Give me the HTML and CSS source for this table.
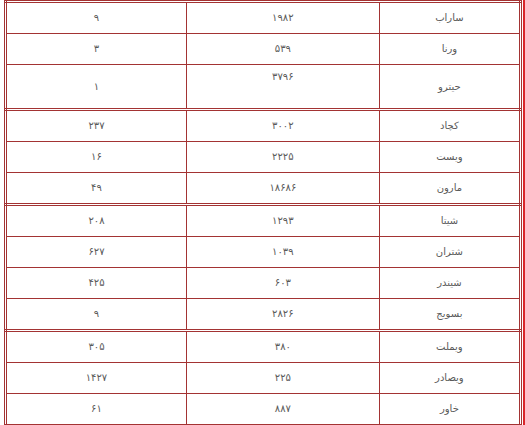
FILE: index.html
```html
<!DOCTYPE html>
<html lang="fa">
<head>
<meta charset="utf-8">
<link rel="stylesheet" href="styles.css">
</head>
<body>
<div class="wrap">
<table class="grid" dir="rtl">
<colgroup><col class="c-name"><col class="c-mid"><col class="c-left"></colgroup>
<tbody>
<tr><td>ساراب</td><td>۱۹۸۲</td><td>۹</td></tr>
<tr class="short"><td>ورنا</td><td>۵۳۹</td><td>۳</td></tr>
<tr class="tall"><td>حیترو</td><td class="top">۳۷۹۶</td><td>۱</td></tr>
</tbody>
<tbody>
<tr><td>کچاد</td><td>۳۰۰۲</td><td>۲۳۷</td></tr>
<tr><td>ویست</td><td>۲۲۲۵</td><td>۱۶</td></tr>
<tr><td>مارون</td><td>۱۸۶۸۶</td><td>۴۹</td></tr>
</tbody>
<tbody>
<tr><td>شیتا</td><td>۱۲۹۳</td><td>۲۰۸</td></tr>
<tr><td>شتران</td><td>۱۰۳۹</td><td>۶۲۷</td></tr>
<tr class="shorter"><td>شیندر</td><td>۶۰۳</td><td>۴۲۵</td></tr>
<tr><td>بسویج</td><td>۲۸۲۶</td><td>۹</td></tr>
</tbody>
<tbody>
<tr><td>ویملت</td><td>۳۸۰</td><td>۳۰۵</td></tr>
<tr class="short"><td>ویصادر</td><td>۲۲۵</td><td>۱۴۲۷</td></tr>
<tr><td>خاور</td><td>۸۸۷</td><td>۶۱</td></tr>
</tbody>
<tbody>
<tr><td>&nbsp;</td><td>&nbsp;</td><td>&nbsp;</td></tr>
</tbody>
</table>
</div>
</body>
</html>
```
FILE: styles.css
```css
html, body {
  margin: 0;
  padding: 0;
  background: #fff;
  overflow: hidden;
}
.wrap {
  width: 519px;
  padding-left: 4px;
  border-right: 2px solid #d9262b;
}
.grid {
  width: 518px;
  border-collapse: collapse;
  font-family: "DejaVu Sans", sans-serif;
  font-size: 10px;
  color: #5a5a5a;
}
.c-name { width: 142px; }
.c-mid { width: 194px; }
.c-left { width: 182px; }
.grid tbody {
  border: 3px double #a33333;
}
.grid td {
  border: 1px solid #a33333;
  text-align: center;
  vertical-align: middle;
  line-height: 16px;
  height: 16px;
  padding: 7px 4px;
}
.grid tr.tall td {
  height: 29px;
}
.grid tr.short td {
  height: 15px;
}
.grid tr.shorter td {
  height: 13px;
}
.grid td.top {
  vertical-align: top;
  padding-top: 4px;
}
```
